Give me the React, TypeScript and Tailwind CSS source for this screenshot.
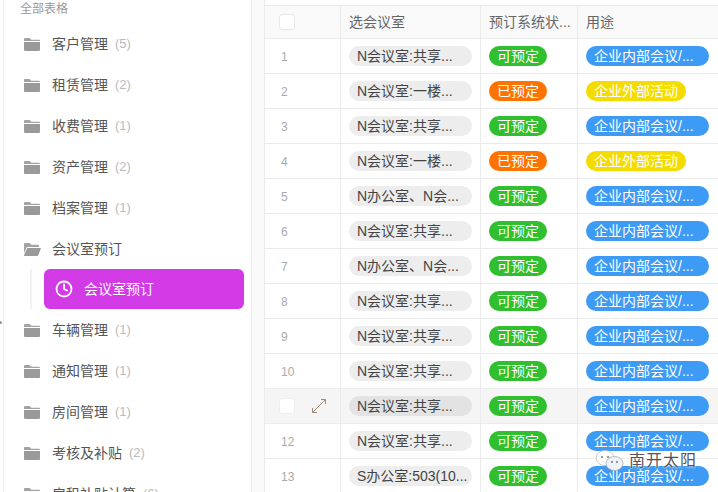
import { Clock } from 'lucide-react';

const FONT = "font-['Liberation_Sans','Noto_Sans_CJK_SC',sans-serif]";

const FOLDERS_TOP = [
  { name: '客户管理', count: 5 },
  { name: '租赁管理', count: 2 },
  { name: '收费管理', count: 1 },
  { name: '资产管理', count: 2 },
  { name: '档案管理', count: 1 },
];

const FOLDERS_BOTTOM = [
  { name: '车辆管理', count: 1 },
  { name: '通知管理', count: 1 },
  { name: '房间管理', count: 1 },
  { name: '考核及补贴', count: 2 },
  { name: '房租补贴计算', count: 6 },
];

const SHARED = 'N会议室:共享...';
const LOBBY = 'N会议室:一楼...';
const OFFICE = 'N办公室、N会...';

const ROWS = [
  { room: SHARED, booked: false },
  { room: LOBBY, booked: true },
  { room: SHARED, booked: false },
  { room: LOBBY, booked: true },
  { room: OFFICE, booked: false },
  { room: SHARED, booked: false },
  { room: OFFICE, booked: false },
  { room: SHARED, booked: false },
  { room: SHARED, booked: false },
  { room: SHARED, booked: false },
  { room: SHARED, booked: false, hover: true },
  { room: SHARED, booked: false },
  { room: 'S办公室:503(10...', booked: false },
];

function FolderIcon() {
  return (
    <svg width="16" height="13" viewBox="0 0 16 13" className="shrink-0" aria-hidden="true">
      <path d="M1 0h4.600l1.600 1.800H15a1 1 0 0 1 1 1V3H0V1a1 1 0 0 1 1-1z" fill="#a3a3a3" />
      <path d="M0 4h16v8a1 1 0 0 1-1 1H1a1 1 0 0 1-1-1z" fill="#9a9a9a" />
    </svg>
  );
}

function OpenFolderIcon() {
  return (
    <svg width="17" height="13" viewBox="0 0 17 13" className="shrink-0" aria-hidden="true">
      <path d="M1 0h4.600l1.600 1.800H14a1 1 0 0 1 1 1V4H3L0 10V1a1 1 0 0 1 1-1z" fill="#a3a3a3" />
      <path d="M3.400 5H17l-2.600 7a1.500 1.500 0 0 1-1.400 1H1a1 1 0 0 1-.9-1.300z" fill="#9a9a9a" />
    </svg>
  );
}

function FolderRow({ name, count }: { name: string; count: number }) {
  return (
    <div className="flex h-[41px] items-center pl-5">
      <FolderIcon />
      <span className="ml-3 text-[14px] text-[#555]">{name}</span>
      <span className="mb-px ml-[7px] text-[13px] text-[#bbb]">({count})</span>
    </div>
  );
}

function Sidebar() {
  return (
    <div className="relative h-full w-[249px] shrink-0 overflow-hidden border-x border-[#ebedf0] bg-white pt-px">
      <p className="ml-4 h-[23px] text-[12px] leading-[16px] text-[#999]">全部表格</p>
      {FOLDERS_TOP.map((f) => (
        <FolderRow key={f.name} {...f} />
      ))}
      <div className="flex h-[40px] items-center pl-5">
        <OpenFolderIcon />
        <span className="ml-[11px] text-[14px] text-[#555]">会议室预订</span>
      </div>
      <div className="flex h-[40px]">
        <div className="ml-[26px] w-[2px] bg-[#f2f2f2]" />
        <div className="ml-3 mr-[7px] flex flex-1 items-center rounded-[6px] bg-[#d23ae6] pl-[11px] text-white">
          <Clock size={18} strokeWidth={2.4} />
          <span className="ml-[11px] text-[14px]">会议室预订</span>
        </div>
      </div>
      <div className="h-px" />
      {FOLDERS_BOTTOM.map((f) => (
        <FolderRow key={f.name} {...f} />
      ))}
    </div>
  );
}

function Pill({ label, className }: { label: string; className: string }) {
  return (
    <span className={`flex h-5 items-center whitespace-nowrap rounded-full px-2 text-[14px] leading-5 ${className}`}>
      {label}
    </span>
  );
}

function ExpandIcon() {
  return (
    <svg width="14" height="14" viewBox="0 0 14 14" fill="none" stroke="#a08a78" strokeWidth="1" aria-hidden="true">
      <path d="M9 .5h4.500V5M13.500 .5L.5 13.500M.5 9v4.500H5" />
    </svg>
  );
}

function Row({ n, room, booked, hover }: { n: number; room: string; booked: boolean; hover?: boolean }) {
  return (
    <div className={`flex h-[35px] shrink-0 border-b border-[#ebebeb] ${hover ? 'bg-[#f5f5f5]' : 'bg-white'}`}>
      <div className="flex w-[76px] shrink-0 items-center border-r border-[#ebebeb]">
        {hover ? (
          <>
            <span className="ml-[14px] h-4 w-4 rounded-[3px] border border-[#eee] bg-white" />
            <span className="ml-[17px] flex">
              <ExpandIcon />
            </span>
          </>
        ) : (
          <span className="ml-4 pt-[2px] text-[12px] text-[#aaa]">{n}</span>
        )}
      </div>
      <div className="flex w-[140px] shrink-0 items-center border-r border-[#ebebeb] pl-2">
        <Pill label={room} className={`w-[123px] text-[#444] ${hover ? 'bg-[#e3e3e3]' : 'bg-[#ededed]'}`} />
      </div>
      <div className="flex w-[97px] shrink-0 items-center border-r border-[#ebebeb] pl-2">
        <Pill label={booked ? '已预定' : '可预定'} className={`text-white ${booked ? 'bg-[#ff7300]' : 'bg-[#2fbf2f]'}`} />
      </div>
      <div className="flex flex-1 items-center pl-2">
        {booked ? (
          <Pill label="企业外部活动" className="bg-[#f5dc00] text-white" />
        ) : (
          <Pill label="企业内部会议/..." className="w-[123px] bg-[#3d9bf5] text-white" />
        )}
      </div>
    </div>
  );
}

function RecordTable() {
  return (
    <div className="flex h-full flex-1 flex-col overflow-hidden border-l border-[#ebebeb] bg-white pt-[5px]">
      <div className="flex h-[34px] shrink-0 border-y border-[#ebebeb] bg-[#f9f9f9] text-[14px] text-[#666]">
        <div className="flex w-[76px] shrink-0 items-center border-r border-[#ebebeb]">
          <span className="ml-[14px] h-4 w-4 rounded-[3px] border border-[#e8e8e8] bg-white" />
        </div>
        <div className="flex w-[140px] shrink-0 items-center border-r border-[#ebebeb] pl-2">选会议室</div>
        <div className="flex w-[97px] shrink-0 items-center border-r border-[#ebebeb] pl-2">预订系统状...</div>
        <div className="flex flex-1 items-center pl-2">用途</div>
      </div>
      {ROWS.map((r, i) => (
        <Row key={i} n={i + 1} room={r.room} booked={r.booked} hover={r.hover} />
      ))}
    </div>
  );
}

function Watermark() {
  return (
    <div className="absolute left-[595px] top-[449px] flex items-center">
      <svg width="30" height="24" viewBox="0 0 30 24" aria-hidden="true">
        <ellipse cx="10" cy="9" rx="9" ry="7.500" fill="#fff" stroke="#bbb" strokeWidth="0.8" />
        <ellipse cx="19.500" cy="14.500" rx="8.500" ry="7" fill="#eef3f8" stroke="#aaa" strokeWidth="0.8" />
        <circle cx="7" cy="8" r="1.100" fill="#888" />
        <circle cx="13" cy="8" r="1.100" fill="#888" />
        <circle cx="17" cy="13" r="1" fill="#777" />
        <circle cx="22" cy="13" r="1" fill="#777" />
      </svg>
      <span className="ml-[4px] text-[16px] tracking-[1px] text-[#555] [text-shadow:0_0_2px_#fff,0_0_2px_#fff]">南开太阳</span>
    </div>
  );
}

export default function App() {
  return (
    <div className={`relative flex h-[492px] w-[718px] overflow-hidden bg-[#fafafa] ${FONT}`}>
      <div className="w-[3px] shrink-0 bg-white" />
      <Sidebar />
      <div className="w-[12px] shrink-0 bg-[#fafafa]" />
      <RecordTable />
      <span className="absolute left-0 top-[321px] h-[3px] w-[2px] rounded-r-full bg-[#999]" />
      <Watermark />
    </div>
  );
}
